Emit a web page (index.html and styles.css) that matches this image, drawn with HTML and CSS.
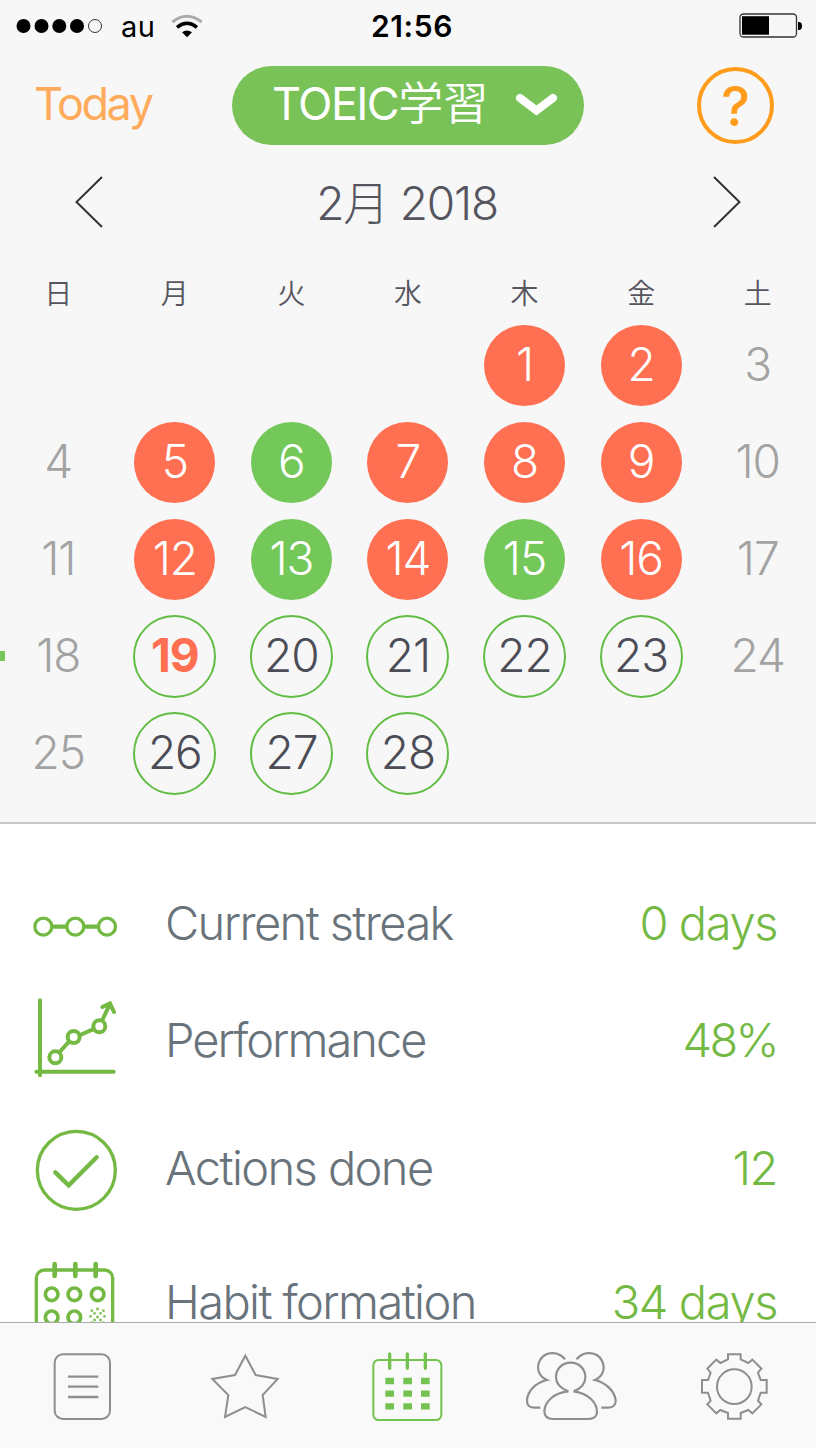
FILE: index.html
```html
<!DOCTYPE html>
<html lang="ja">
<head>
    <meta charset="UTF-8">
    <title>TOEIC学習</title>
    <link rel="stylesheet" href="styles.css">
</head>
<body>
    <div class="screen">
        <div class="status-bar">
            <div class="carrier">
                <svg class="signal" width="86" height="16" viewBox="0 0 86 16">
                    <circle cx="7.500" cy="8" r="7"/>
                    <circle cx="25.500" cy="8" r="7"/>
                    <circle cx="43.300" cy="8" r="7"/>
                    <circle cx="61" cy="8" r="7"/>
                    <circle cx="79" cy="8" r="6.500" fill="none" stroke="#333"/>
                </svg>
                <span class="carrier-name">au</span>
                <svg class="wifi" width="32" height="24" viewBox="0 0 96 72">
                    <path d="M4 24 Q48 -10 92 24" fill="none" stroke="#aaa" stroke-width="9"/>
                    <path d="M18 40 Q48 16 78 40" fill="none" stroke="#000" stroke-width="10"/>
                    <path d="M33 55 Q48 44 63 55 L48 70 Z"/>
                </svg>
            </div>
            <div class="clock">21:56</div>
            <svg class="battery" width="64" height="26" viewBox="0 0 64 26">
                <rect x="1" y="1" width="56.500" height="23" rx="3.500" fill="none" stroke="#333" stroke-width="1.300"/>
                <rect x="3" y="3.200" width="27" height="18.500"/>
                <path d="M59 9 Q63 8.500 63 13 Q63 17.500 59 17 Z"/>
            </svg>
        </div>

        <div class="nav-bar">
            <a class="today">Today</a>
            <div class="habit-select">
                <span class="habit-name">TOEIC<span class="kanji">学習</span></span>
                <svg width="44" height="26" viewBox="0 0 44 26">
                    <path d="M5 5 L21.500 17.500 L38 5" fill="none" stroke="#fff" stroke-width="8" stroke-linecap="round"/>
                </svg>
            </div>
            <div class="help">?</div>
        </div>

        <div class="month-bar">
            <svg width="30" height="54" viewBox="0 0 30 54">
                <path d="M28 2 L2.500 27 L28 52" fill="none" stroke="#333" stroke-width="2"/>
            </svg>
            <div class="month-title">2月 2018</div>
            <svg width="30" height="54" viewBox="0 0 30 54">
                <path d="M2 2 L27.500 27 L2 52" fill="none" stroke="#333" stroke-width="2"/>
            </svg>
        </div>

        <div class="calendar">
            <div class="weekdays">
                <span>日</span><span>月</span><span>火</span><span>水</span><span>木</span><span>金</span><span>土</span>
            </div>
            <div class="days">
                <div></div><div></div><div></div><div></div>
                <div class="day missed">1</div>
                <div class="day missed">2</div>
                <div class="day">3</div>

                <div class="day">4</div>
                <div class="day missed">5</div>
                <div class="day done">6</div>
                <div class="day missed">7</div>
                <div class="day missed">8</div>
                <div class="day missed">9</div>
                <div class="day">10</div>

                <div class="day">11</div>
                <div class="day missed">12</div>
                <div class="day done">13</div>
                <div class="day missed">14</div>
                <div class="day done">15</div>
                <div class="day missed">16</div>
                <div class="day">17</div>

                <div class="day week-mark">18</div>
                <div class="day planned current">19</div>
                <div class="day planned">20</div>
                <div class="day planned">21</div>
                <div class="day planned">22</div>
                <div class="day planned">23</div>
                <div class="day">24</div>

                <div class="day">25</div>
                <div class="day planned">26</div>
                <div class="day planned">27</div>
                <div class="day planned">28</div>
            </div>
        </div>

        <div class="stats">
            <div class="stat streak">
                <svg width="90" height="30" viewBox="0 0 270 90">
                    <g fill="none" stroke="#74b943" stroke-width="10">
                        <path d="M60 47 H100 M154 47 H196" stroke-width="13"/>
                        <circle cx="31" cy="47" r="25.500"/>
                        <circle cx="127" cy="47" r="25.500"/>
                        <circle cx="222" cy="47" r="25.500"/>
                    </g>
                </svg>
                <span class="stat-label">Current streak</span>
                <span class="stat-value">0 days</span>
            </div>
            <div class="stat performance">
                <svg width="90" height="84" viewBox="0 0 270 252">
                    <g fill="none" stroke="#74b943" stroke-width="12" stroke-linecap="round">
                        <path d="M21 16 V241 M10 230 H242"/>
                        <circle cx="67" cy="187" r="18"/>
                        <circle cx="122" cy="126" r="18"/>
                        <circle cx="199" cy="94" r="18"/>
                        <path d="M80 171 L108 140 M141 120 L180 103 M208 75 L230 29 M208 36 L231 25 L243 51"/>
                    </g>
                </svg>
                <span class="stat-label">Performance</span>
                <span class="stat-value percent">48%</span>
            </div>
            <div class="stat actions">
                <svg width="90" height="84" viewBox="0 0 270 252">
                    <g fill="none" stroke="#74b943" stroke-linecap="round">
                        <circle cx="130" cy="127" r="117" stroke-width="10"/>
                        <path d="M67 133 L107 172 L191 88" stroke-width="13"/>
                    </g>
                </svg>
                <span class="stat-label">Actions done</span>
                <span class="stat-value">12</span>
            </div>
            <div class="stat formation">
                <svg width="90" height="84" viewBox="0 0 270 252">
                    <g fill="none" stroke="#74b943" stroke-width="10">
                        <rect x="10" y="30" width="229" height="220" rx="24"/>
                        <path d="M65 12 V48 M127 12 V48 M188 12 V48" stroke-width="14" stroke-linecap="round"/>
                        <circle cx="56" cy="103" r="19" stroke-width="11"/>
                        <circle cx="124" cy="103" r="19" stroke-width="11"/>
                        <circle cx="194" cy="103" r="19" stroke-width="11"/>
                        <circle cx="56" cy="172" r="19" stroke-width="11"/>
                        <circle cx="124" cy="172" r="19" stroke-width="11"/>
                        <path d="M190 147 h7 M173 152 h7 M208 152 h7 M181 160 h7 M199 160 h7 M169 169 h7 M190 171 h7 M211 169 h7 M181 180 h7 M199 180 h7 M173 188 h7 M208 188 h7" stroke-width="7"/>
                    </g>
                </svg>
                <span class="stat-label">Habit formation</span>
                <span class="stat-value">34 days</span>
            </div>
        </div>

        <div class="tab-bar">
            <div class="tab">
                <svg width="60" height="70" viewBox="0 0 180 210">
                    <g fill="none" stroke="#8e8e8e" stroke-width="6">
                        <rect x="8" y="10" width="166" height="194" rx="25"/>
                        <path d="M48 77 H139 M48 107 H139 M48 138 H139" stroke-width="7"/>
                    </g>
                </svg>
            </div>
            <div class="tab">
                <svg width="72" height="70" viewBox="0 0 216 210">
                    <path d="M109 14 L140 72 L206 84 L161 132 L170 198 L109 168 L48 198 L58 132 L10 84 L78 72 Z" fill="none" stroke="#8e8e8e" stroke-width="6"/>
                </svg>
            </div>
            <div class="tab">
                <svg width="72" height="74" viewBox="0 0 216 222">
                    <g fill="none" stroke="#74c24f">
                        <rect x="4" y="33" width="204" height="180" rx="16" stroke-width="6"/>
                        <path d="M53 15 V58 M106 15 V58 M160 15 V58" stroke-width="10" stroke-linecap="round"/>
                        <path d="M40 96 H66 M94 96 H120 M147 96 H173 M40 134 H66 M94 134 H120 M147 134 H173 M40 172 H66 M94 172 H120 M147 172 H173" stroke-width="19"/>
                    </g>
                </svg>
            </div>
            <div class="tab">
                <svg width="92" height="72" viewBox="0 0 276 216">
                    <g fill="none" stroke="#8e8e8e" stroke-width="6.500">
                        <path d="M130 124 C117 119 93 108 93 82 C93 57 111 38 137 38 C163 38 181 57 181 82 C181 108 159 119 146 124 C191 130 216 158 216 186 C216 200 203 207 188 207 H84 C67 207 58 199 58 182 C60 154 88 128 130 124 Z"/>
                        <path d="M120 28 C99 1 59 4 44 32 C33 55 41 80 66 90 C29 99 8 125 6 150 C5 166 13 173 27 173 H46"/>
                        <path d="M155 28 C175 1 216 4 231 32 C242 55 234 80 210 90 C246 99 269 126 272 150 C273 166 264 173 250 173 H229"/>
                    </g>
                </svg>
            </div>
            <div class="tab">
                <svg width="70" height="70" viewBox="0 0 210 210">
                    <g fill="none" stroke="#8e8e8e" stroke-width="6">
                        <path d="M87 10 H125 V25 L148 36 L160 26 L187 53 L177 65 L185 87 H203 V125 H185 L177 149 L187 160 L160 187 L148 177 L125 186 V203 H87 V186 L64 177 L52 187 L25 160 L35 149 L27 125 H9 V87 H27 L35 65 L25 53 L52 26 L64 36 L87 25 Z"/>
                        <circle cx="106" cy="107" r="52"/>
                    </g>
                </svg>
            </div>
        </div>
    </div>
</body>
</html>
```
FILE: styles.css
```css
body {
    margin: 0;
    background: #fff;
    font-family: Inter, "Noto Sans CJK JP", sans-serif;
    font-weight: 300;
}
svg {
    display: block;
    flex: none;
}
.screen {
    width: 816px;
    height: 1448px;
    display: flex;
    flex-direction: column;
    overflow: hidden;
    background: #f7f7f7;
}

/* status bar */
.status-bar {
    height: 52px;
    display: grid;
    grid-template-columns: 1fr auto 1fr;
    align-items: center;
    padding: 0 13px 0 16px;
    color: #000;
}
.carrier {
    display: flex;
    align-items: center;
}
.carrier-name {
    font-size: 29px;
    font-weight: 400;
    letter-spacing: 0.5px;
    margin: 0 16px 0 19px;
}
.clock {
    font-size: 30px;
    font-weight: 600;
    letter-spacing: 0.6px;
    padding-left: 5px;
}
.battery {
    justify-self: end;
}

/* navigation */
.nav-bar {
    height: 79px;
    margin-top: 14px;
    display: grid;
    grid-template-columns: 198px 352px 1fr;
    align-items: center;
    padding: 0 42px 0 34px;
}
.today {
    color: #ffab5c;
    font-size: 45px;
    line-height: 76px;
    padding-bottom: 3px;
    font-weight: 400;
    letter-spacing: -2.5px;
}
.habit-select {
    display: flex;
    align-items: center;
    justify-content: space-between;
    height: 79px;
    padding: 0 25px 0 40px;
    box-sizing: border-box;
    border-radius: 40px;
    background: #79c257;
    color: #fff;
}
.habit-name {
    font-size: 45px;
    line-height: 75px;
    padding-bottom: 4px;
    font-weight: 400;
    letter-spacing: -1.6px;
    white-space: nowrap;
}
.kanji {
    font-weight: 350;
    letter-spacing: 0;
}
.help {
    justify-self: end;
    width: 77px;
    height: 77px;
    box-sizing: border-box;
    border: 4px solid #ff9c1b;
    border-radius: 50%;
    color: #ff9c1b;
    font-size: 55px;
    line-height: 70px;
    font-weight: 500;
    text-align: center;
}

/* month switcher */
.month-bar {
    height: 114px;
    display: flex;
    align-items: center;
    justify-content: space-between;
    padding: 0 74px;
}
.month-title {
    color: #55555f;
    font-size: 46px;
    letter-spacing: -1.2px;
    padding: 0 2px 5px 0;
}

/* calendar */
.calendar {
    height: 563px;
    border-bottom: 2px solid #c6c6c8;
}
.weekdays {
    display: grid;
    grid-template-columns: repeat(7, 1fr);
    height: 66px;
    line-height: 70px;
    text-align: center;
    font-size: 28px;
    font-weight: 350;
    color: #55555f;
}
.days {
    display: grid;
    grid-template-columns: repeat(7, 1fr);
    grid-auto-rows: 81px;
    row-gap: 15.9px;
    justify-items: center;
}
.day {
    width: 81px;
    height: 81px;
    border-radius: 50%;
    color: #a3a3a3;
    font-size: 46px;
    line-height: 79px;
    letter-spacing: -1px;
    text-align: center;
}
.missed {
    background: #ff6f51;
    color: #fff;
}
.done {
    background: #74c85a;
    color: #fff;
}
.planned {
    margin: -1px;
    border: 2px solid #62bd45;
    width: 79px;
    height: 79px;
    line-height: 77px;
    color: #4c4c56;
}
.current {
    color: #ff6f51;
    font-weight: 700;
}
.week-mark {
    position: relative;
}
.week-mark::before {
    content: "";
    position: absolute;
    left: -18px;
    top: 35px;
    width: 5px;
    height: 10px;
    background: #74c85a;
}

/* statistics */
.stats {
    height: 498px;
    padding: 44px 39px 0 33px;
    box-sizing: border-box;
    background: #fff;
    overflow: hidden;
}
.stat {
    display: flex;
    align-items: center;
    font-size: 47px;
    line-height: 56px;
}
.stat span {
    padding-bottom: 6px;
}
.streak { height: 116px; }
.performance { height: 106px; }
.performance span {
    padding: 5px 0 0;
}
.actions { height: 160px; }
.actions span {
    padding-bottom: 4px;
}
.formation { height: 103px; }
.formation span {
    padding: 0;
}
.stat-label {
    flex: 1;
    margin-left: 42px;
    color: #69737b;
    letter-spacing: -1.6px;
}
.stat-value {
    color: #74b943;
    letter-spacing: -1.4px;
}
.performance .stat-label {
    letter-spacing: -2px;
}
.percent {
    letter-spacing: -2.6px;
}

/* tab bar */
.tab-bar {
    height: 126px;
    box-sizing: border-box;
    border-top: 1px solid #a9a9a9;
    background: #f9f9f9;
    display: grid;
    grid-template-columns: repeat(5, 1fr);
}
.tab {
    display: flex;
    align-items: center;
    justify-content: center;
}
```
